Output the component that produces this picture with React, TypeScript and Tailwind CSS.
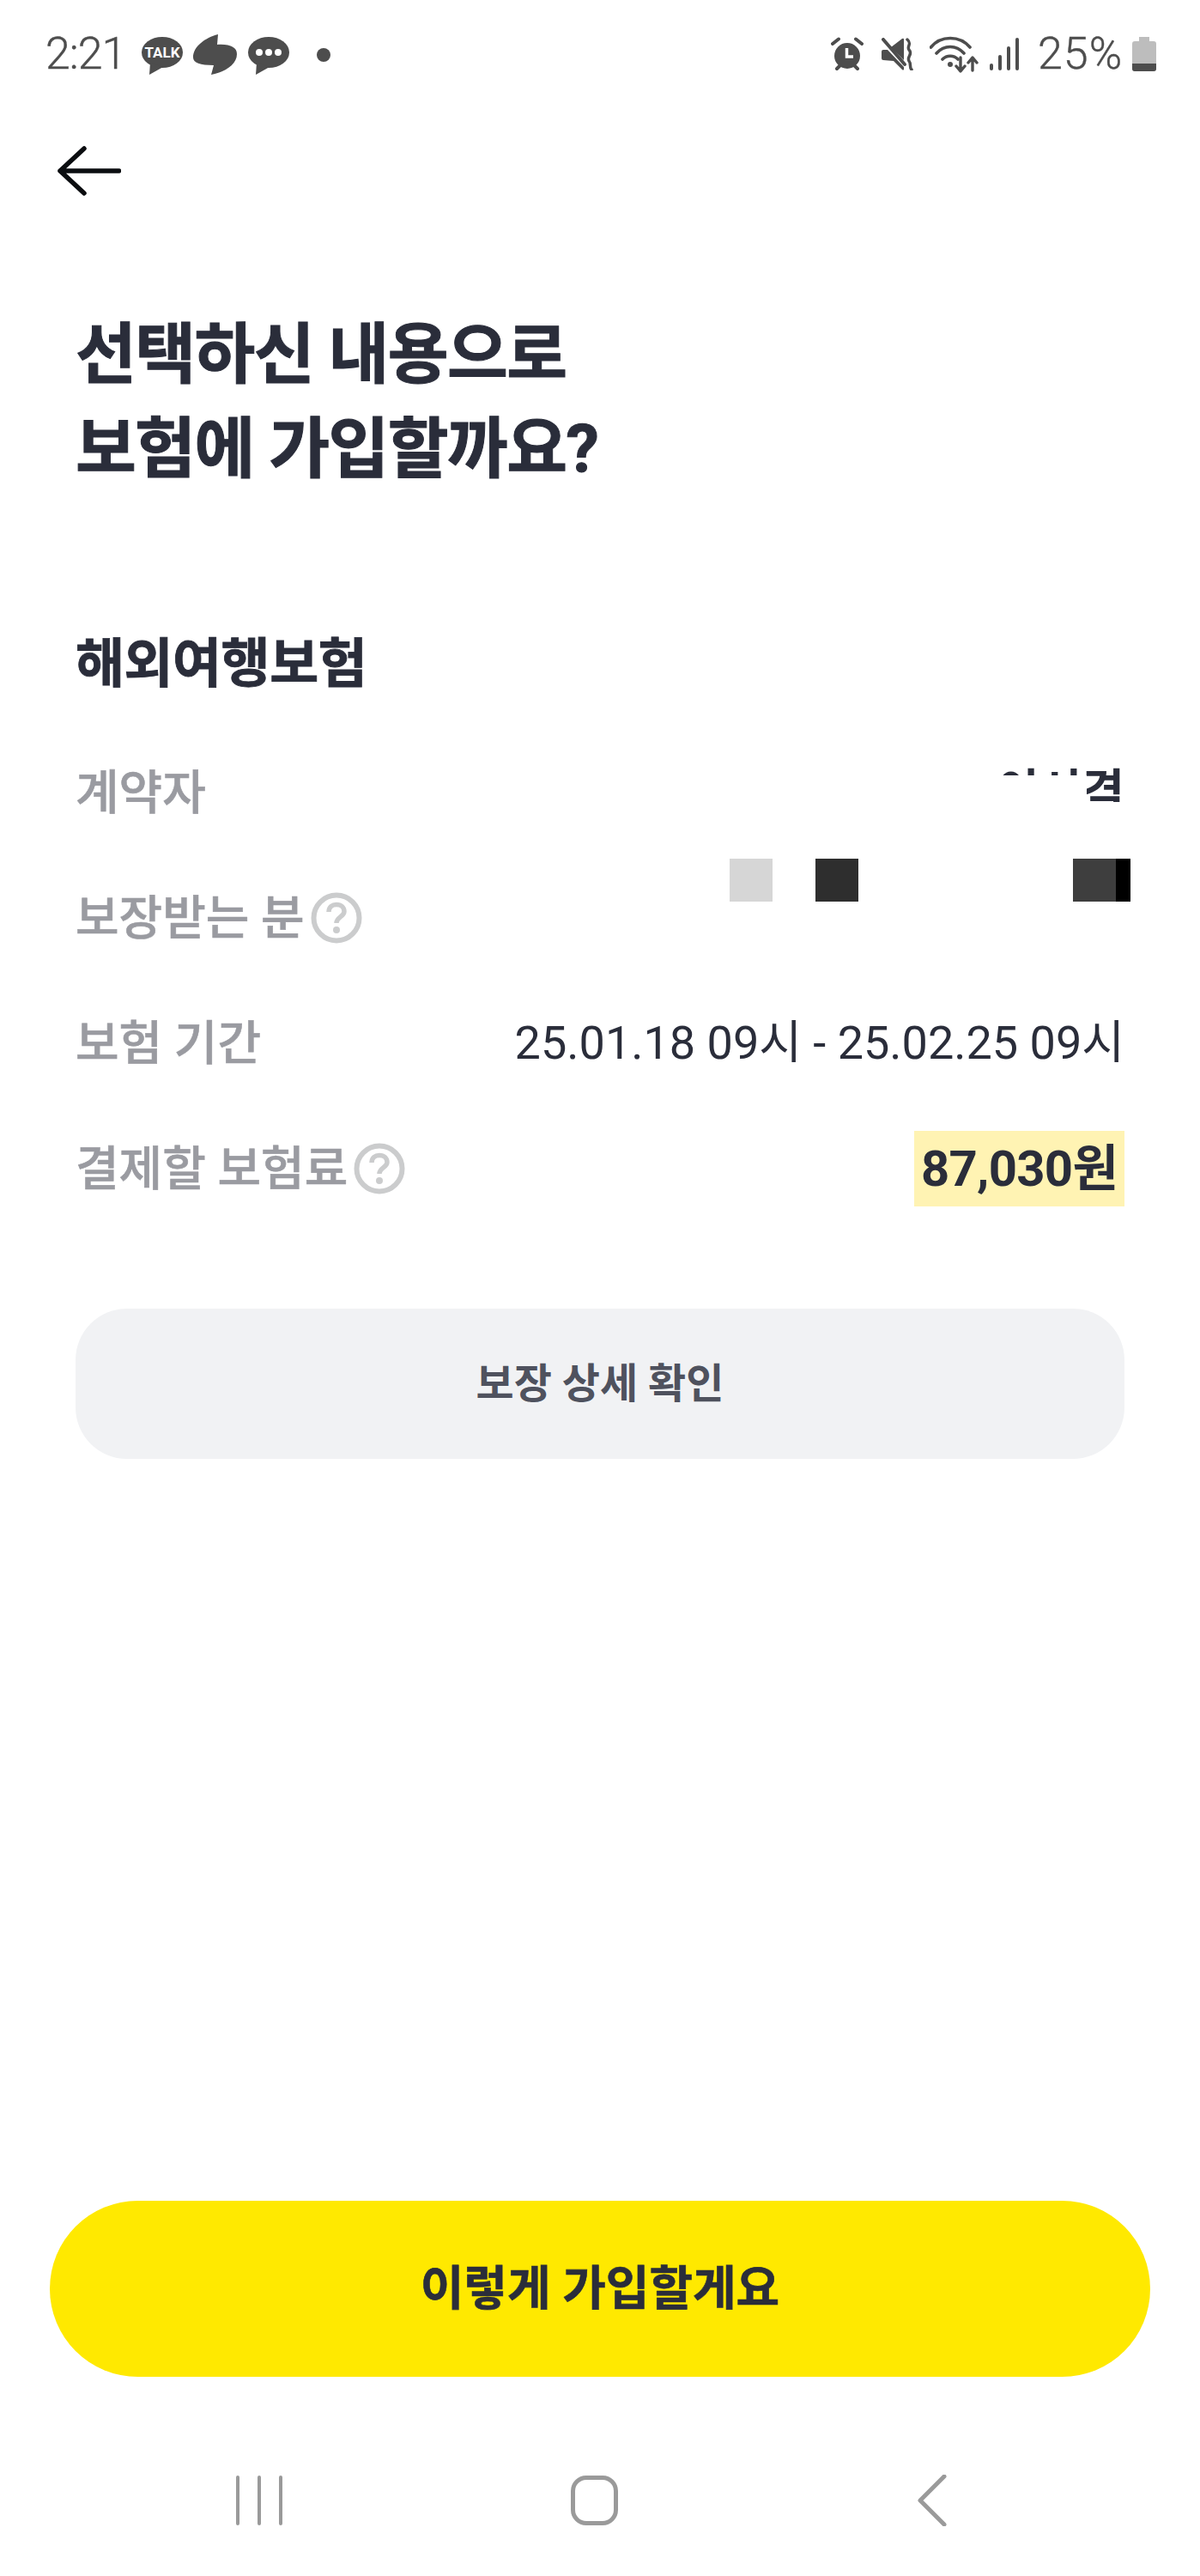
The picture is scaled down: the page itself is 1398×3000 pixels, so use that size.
import React from "react";

const KR = "font-['Roboto','Noto_Sans_CJK_KR',sans-serif]";

function Bubble({ children }: { children: React.ReactNode }) {
  return (
    <svg width="48" height="44" viewBox="0 0 48 44" className="block">
      <ellipse cx="24" cy="18" rx="24" ry="18" fill="#4d4d4d" />
      <path d="M10 30 L9 44 L25 35 Z" fill="#4d4d4d" />
      {children}
    </svg>
  );
}

function Help() {
  return (
    <svg width="60" height="60" viewBox="0 0 60 60" className="block shrink-0">
      <circle cx="30" cy="30" r="26.5" fill="none" stroke="#cbcccd" strokeWidth="6" />
      <path d="M21 23 C21 17 25 14.5 30 14.5 C35.5 14.5 39 18 39 22.5 C39 28.5 30 29 30 36" fill="none" stroke="#cbcccd" strokeWidth="5.5" />
      <circle cx="30" cy="44" r="4" fill="#cbcccd" />
    </svg>
  );
}

function Label({ children }: { children: React.ReactNode }) {
  return (
    <span className="text-[55px] leading-[60px] font-medium text-[#9a9ba1] [-webkit-text-stroke:0.6px_#9a9ba1]">
      {children}
    </span>
  );
}

export default function App() {
  return (
    <div className={`${KR} flex h-[3000px] w-[1398px] flex-col bg-white text-[#2a2d3a]`}>
      {/* status bar */}
      <div className="flex h-[126px] items-center justify-between pl-[53px] pr-[51px] text-[#4d4d4d]">
        <div className="flex items-center">
          <span className="w-[90px] text-[52px] font-light leading-none tracking-[-1px] [-webkit-text-stroke:0.4px_#4d4d4d]">2:21</span>
          <div className="ml-[22px] mt-[3px]">
            <Bubble>
              <text x="24" y="24" textAnchor="middle" fontSize="17" fontWeight="700" fill="#fff" fontFamily="Roboto">TALK</text>
            </Bubble>
          </div>
          <svg width="52" height="47" viewBox="0 0 52 47" className="ml-[12px] block">
            <path d="M29 0 C14 4 0 14 0 27 C0 33 8 36 24 36 L21 47 C37 44 51 35 51 23 C51 15 43 11 28 12 Z" fill="#4d4d4d" />
          </svg>
          <div className="ml-[12px] mt-[3px]">
            <Bubble>
              <circle cx="13" cy="18" r="4" fill="#fff" />
              <circle cx="24" cy="18" r="4" fill="#fff" />
              <circle cx="35" cy="18" r="4" fill="#fff" />
            </Bubble>
          </div>
          <div className="ml-[32px] mt-[2px] h-4 w-4 rounded-full bg-[#4d4d4d]" />
        </div>
        <div className="flex items-center">
          {/* alarm */}
          <svg width="38" height="40" viewBox="0 0 38 40" className="block">
            <circle cx="19" cy="22" r="15" fill="#4d4d4d" />
            <path d="M2 8 L9 2.5 M36 8 L29 2.5 M7 37 L10 34 M31 37 L28 34" stroke="#4d4d4d" strokeWidth="4" strokeLinecap="round" />
            <path d="M18.5 13 V23 H26" fill="none" stroke="#fff" strokeWidth="3.5" />
          </svg>
          {/* mute */}
          <svg width="38" height="38" viewBox="0 0 38 38" className="ml-[21px] block">
            <path d="M0 16 Q0 14 2 14 L7 14 L26 34 L26 37 Q25 38 24 37 L14 27 L2 26 Q0 26 0 24 Z M11 11 L24 1 Q26 0 26 2 L26 26 Z" fill="#4d4d4d" />
            <path d="M2 2 L27 31" stroke="#4d4d4d" strokeWidth="4" strokeLinecap="round" />
            <path d="M31 2 C37 7 30 10 33 14 C38 19 30 22 33 27 C36 31 33 34 36 37" transform="translate(-1 0)" fill="none" stroke="#4d4d4d" strokeWidth="3.5" strokeLinecap="round" />
          </svg>
          {/* wifi */}
          <svg width="58" height="43" viewBox="0 0 58 43" className="ml-[18px] block">
            <path d="M1.5 13 C13 -1 35 -1 47 13 M8 20 C17 10 31 10 40 20 M15 27 C20 22 28 22 33 27" fill="none" stroke="#4d4d4d" strokeWidth="3.6" strokeLinecap="round" />
            <circle cx="24" cy="33" r="3" fill="#4d4d4d" />
            <path d="M36 25 V40 M31 35 L36 41 L41 35 M50 40 V26 M45 31 L50 25 L55 31" fill="none" stroke="#4d4d4d" strokeWidth="3.4" strokeLinecap="round" strokeLinejoin="round" />
          </svg>
          {/* signal */}
          <div className="ml-[12px] flex h-[38px] items-end gap-[6px]">
            <div className="h-[8px] w-1 rounded-[2px] bg-[#4d4d4d]" />
            <div className="h-[18px] w-1 rounded-[2px] bg-[#4d4d4d]" />
            <div className="h-[28px] w-1 rounded-[2px] bg-[#4d4d4d]" />
            <div className="h-[38px] w-1 rounded-[2px] bg-[#4d4d4d]" />
          </div>
          <span className="ml-[22px] w-[101px] text-[52px] font-light leading-none tracking-[1px] [-webkit-text-stroke:0.4px_#4d4d4d]">25%</span>
          <svg width="28" height="40" viewBox="0 0 28 40" className="ml-[9px] block">
            <path d="M8 0 H20 V5 H25 Q28 5 28 8 V37 Q28 40 25 40 H3 Q0 40 0 37 V8 Q0 5 3 5 H8 Z" fill="#bdbdbd" />
            <path d="M0 31 H28 V37 Q28 40 25 40 H3 Q0 40 0 37 Z" fill="#4d4d4d" />
          </svg>
        </div>
      </div>

      {/* back arrow */}
      <svg width="74" height="58" viewBox="0 0 74 58" className="ml-[67px] mt-[44px] block shrink-0">
        <path d="M71.5 29 H3 M31 3 L3 29 L31 55" fill="none" stroke="#0b0d10" strokeWidth="5.5" strokeLinecap="round" strokeLinejoin="round" />
      </svg>

      {/* content */}
      <div className="pl-[88px] pr-[88px]">
        <h1 className="mt-[131px] text-[77px] font-bold leading-[110px] tracking-[-1.6px] [-webkit-text-stroke:1px_#2a2d3a]">
          선택하신 내용으로
          <br />
          보험에 가입할까요?
        </h1>
        <h2 className="mt-[153px] text-[62px] font-bold leading-[84px] tracking-[-0.5px] [-webkit-text-stroke:0.8px_#2a2d3a]">해외여행보험</h2>

        <div className="mt-[63px] flex flex-col gap-[58px]">
          <div className="flex h-[88px] items-center justify-between">
            <Label>계약자</Label>
            <div className="relative h-[60px] text-[54px] font-bold leading-[60px]">
              이시격
              <div className="absolute inset-x-0 top-[10px] bottom-0 mr-[44px] bg-white" />
              <div className="absolute inset-x-0 top-[41px] bottom-0 bg-white" />
            </div>
          </div>

          <div className="flex h-[88px] items-center justify-between">
            <div className="flex items-center gap-[7px]">
              <Label>보장받는 분</Label>
              <Help />
            </div>
            <div className="-mr-[7px] -mt-[88px] flex self-center">
              <div className="h-[50px] w-[50px] bg-[#d6d6d6]" />
              <div className="ml-[50px] h-[50px] w-[50px] bg-[#2e2e2e]" />
              <div className="ml-[250px] h-[50px] w-[50px] bg-[#3e3e3e]" />
              <div className="h-[50px] w-[17px] bg-black" />
            </div>
          </div>

          <div className="flex h-[88px] items-center justify-between">
            <Label>보험 기간</Label>
            <span className="text-[54px] leading-[60px] font-normal">25.01.18 09시 - 25.02.25 09시</span>
          </div>

          <div className="flex h-[88px] items-center justify-between">
            <div className="flex items-center gap-[7px]">
              <Label>결제할 보험료</Label>
              <Help />
            </div>
            <span className="flex h-[88px] w-[245px] items-center justify-center bg-[#fff3b3] text-[58px] font-bold leading-none tracking-[-0.7px]">
              87,030원
            </span>
          </div>
        </div>

        <div className="mt-[119px] flex h-[175px] items-center justify-center rounded-[60px] bg-[#f1f2f4] text-[48px] font-bold text-[#4f525e]">
          보장 상세 확인
        </div>
      </div>

      <div className="flex-1" />

      {/* primary button */}
      <div className="mx-[58px] flex h-[205px] items-center justify-center rounded-[103px] bg-[#ffe900] text-[55px] font-bold [-webkit-text-stroke:0.6px_#2a2d3a]">
        이렇게 가입할게요
      </div>

      {/* nav bar */}
      <div className="mb-[58px] mt-[114px] flex items-center pl-[275px]">
        <svg width="54" height="58" viewBox="0 0 54 58" className="block">
          <path d="M2 2 V56 M27 2 V56 M52 2 V56" stroke="#9a9a9a" strokeWidth="4" strokeLinecap="round" />
        </svg>
        <div className="ml-[336px] h-[58px] w-[55px] rounded-[18px] border-[5px] border-[#9a9a9a]" />
        <svg width="34" height="60" viewBox="0 0 34 60" className="ml-[349px] block">
          <path d="M31 2 L3 30 L31 58" fill="none" stroke="#9a9a9a" strokeWidth="5" strokeLinecap="round" strokeLinejoin="round" />
        </svg>
      </div>
    </div>
  );
}
